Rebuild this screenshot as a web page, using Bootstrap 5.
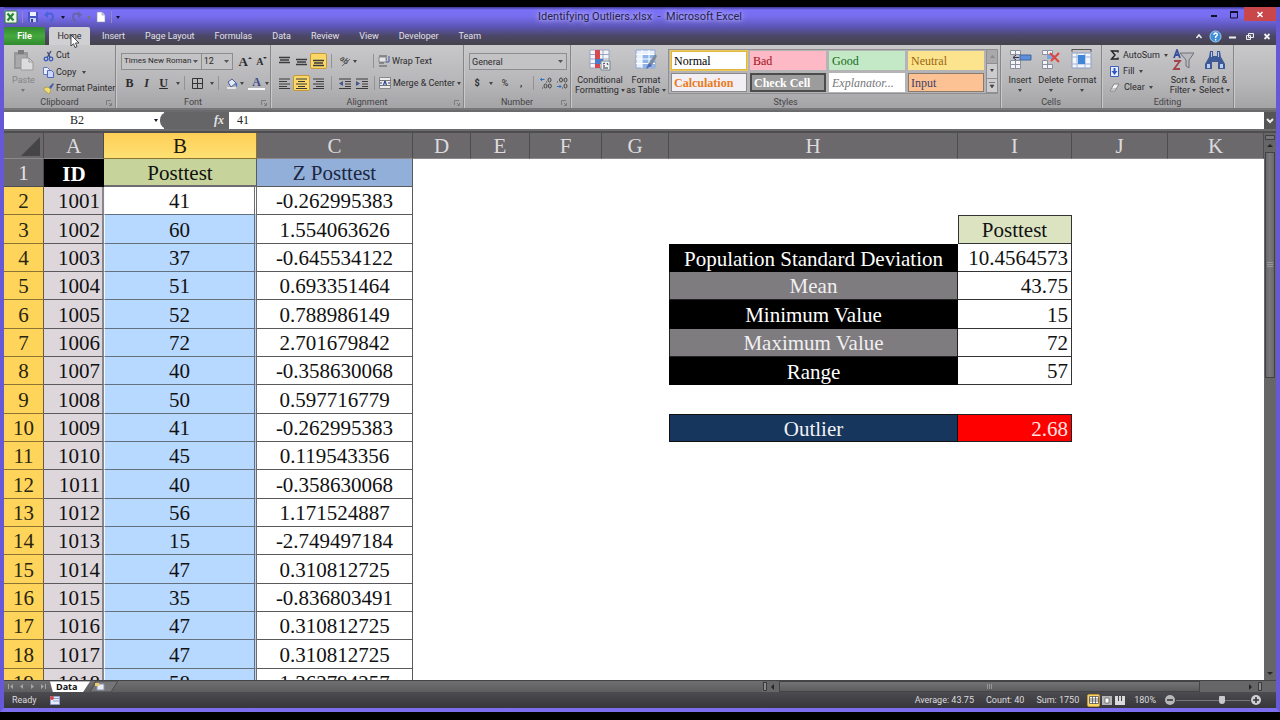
<!DOCTYPE html>
<html lang="en">
<head>
<meta charset="utf-8">
<meta name="viewport" content="width=device-width, initial-scale=1">
<title>Identifying Outliers.xlsx - Microsoft Excel</title>
<link href="https://cdn.jsdelivr.net/npm/bootstrap@5.3.0/dist/css/bootstrap.min.css" rel="stylesheet">
<style>
  :root { --ink: #2b2b2e; --line: #5a595b; }
  body { background: #000; padding: 7px 0 8px; font: 9px/11px Roboto, "Open Sans", sans-serif; color: var(--ink); }
  button, input, select { font: inherit; color: inherit; }
  button { background: none; border: 0; padding: 0; }
  svg { display: block; flex: none; }
  .win { border: solid #6658d6; border-width: 0 4px 4px; border-bottom-color: #7d6ef0; min-width: 1240px; }
  .top-area { background: linear-gradient(#3b3690 0, #7a70f8 3px, #766cec 10px, #5c55b4 20px, #4b4767 29px, #45424b 38px); }
  .title-row { height: 20px; }
  .side { flex: 1 1 0; }
  .doc-title { font-size: 11px; line-height: 20px; color: #26234a; text-shadow: 0 0 4px #c9c4ff, 0 0 6px #b5afff; }
  .vsep { width: 1px; height: 12px; background: #8e8abf; }
  .caret { width: 0; height: 0; border: 2px solid transparent; border-top: 3px solid #444; border-bottom: 0; flex: none; }
  .caret.dim { border-top-color: #777; }
  .caret.dark { border-top-color: #15122c; }
  .win-btn { width: 20px; height: 14px; }
  .win-close { width: 32px; background: #c9474b; }

  .tabs-row { height: 18px; color: #e2e0e8; }
  .tabs-row a { color: inherit; text-decoration: none; line-height: 18px; padding: 0 10px; }
  .tabs-row a.file-tab { background: linear-gradient(#2f8a2c, #47a83f 50%, #2f8c2d); color: #fff; padding: 0; width: 41px; text-align: center; border-radius: 2px 2px 0 0; font-weight: 600; }
  .tabs-row a.on { background: #d0cfd1; color: var(--ink); padding: 0; width: 41px; margin-right: 2px; text-align: center; border-radius: 2px 2px 0 0; }
  .mdi { width: 17px; height: 17px; }

  .ribbon { height: 65px; background: linear-gradient(#c8c7c9, #b6b5b7 60%, #a4a3a5); border-bottom: 2px solid #777678; }
  .grp { border-right: 1px solid #868587; box-shadow: 1px 0 #c9c8ca; position: relative; }
  .grp-body { height: 51px; padding-top: 2px; }
  .grp-name { height: 12px; line-height: 13px; text-align: center; color: #444347; }
  .launcher { position: absolute; right: 3px; bottom: 2px; }
  .g-clip { width: 112px; } .g-font { width: 155px; } .g-align { width: 193px; } .g-num { width: 107px; }
  .g-styles { width: 430px; } .g-cells { width: 101px; } .g-edit { width: 132px; }
  .two-rows { padding: 8px 0 0 5px; gap: 6px; }
  .two-rows > div { height: 16px; }
  .cmd { display: flex; align-items: center; gap: 2px; white-space: nowrap; }
  .combo { height: 17px; border: 1px solid #8d8c8e; border-radius: 0; padding: 0 0 0 2px; appearance: none; line-height: 12px;
    background: #c3c2c4 url("data:image/svg+xml,%3Csvg xmlns='http://www.w3.org/2000/svg' width='5' height='3'%3E%3Cpath d='M0 0h5L2.5 3z' fill='%23555'/%3E%3C/svg%3E") no-repeat right 3px center; }
  .c-name { width: 83px; font-size: 8px; } .c-size { width: 33px; margin-left: -1px; } .c-num { width: 98px; }
  .tool { width: 17px; height: 16px; display: flex; align-items: center; justify-content: center; }
  .tool.on, .view.on { background: #fbd768; border: 1px solid #c69a3a; border-radius: 2px; }
  .serif { font-family: "Liberation Serif", serif; }
  .big { display: flex; flex-direction: column; align-items: center; text-align: center; padding-top: 2px; line-height: 10px; white-space: nowrap; }
  .big svg { margin-bottom: 4px; }
  .vline { width: 1px; height: 14px; background: #929193; }

  .gallery { border: 1px solid #8f8e90; background: #b4b3b5; margin: 2px 0 0 5px; height: 45px; width: 330px; }
  .tiles { display: grid; grid-template-columns: repeat(4, 76px); grid-auto-rows: 19px; gap: 3px; padding: 1px 2px; }
  .tile { line-height: 16px; font-family: "Liberation Serif", serif; font-size: 12px; text-align: left; padding-left: 2px; border: 1px solid transparent; }
  .t-normal { background: #fff; border-color: #e2b73c; outline: 1px solid #e8c860; color: #000; }
  .t-bad { background: #fdb9c5; color: #a01020; } .t-good { background: #c3e9c6; color: #146a20; } .t-neutral { background: #fce48e; color: #9a6410; }
  .t-calc { background: #f2eff4; color: #ea7a1c; border-color: #8a8a8a; font-weight: bold; }
  .t-check { background: #9c9c9c; color: #fff; border: 2px double #4c4c4c; font-weight: bold; line-height: 14px; }
  .t-expl { background: #fff; color: #77767a; font-style: italic; }
  .t-input { background: #fdc294; color: #3e3f66; border-color: #8a7a6c; }
  .gal-nav { width: 11px; border-left: 1px solid #8f8e90; }
  .gal-nav button { flex: 1; border-bottom: 1px solid #8f8e90; background: #cccbcd; display: flex; align-items: center; justify-content: center; }
  .gal-nav button:first-child { background: #a9a8aa; }

  .fbar { background: #6b6a6d; padding: 2px 0; border-bottom: 2px solid #4e4d50; font: 12px/17px "Liberation Serif", serif; }
  .fbar input { border: 0; border-radius: 0; height: 17px; padding: 0; background: #fff; color: #222; outline: 0; min-width: 0; }
  .namebox { width: 160px; background: #fff; height: 17px; }
  .namebox input { width: 146px; text-align: center; }
  .fx { width: 69px; background: #656467; height: 17px; margin-left: -4px; border-radius: 8px 0 0 8px; color: #e4e4e4; padding-right: 5px; font-style: italic; font-weight: bold; }
  .expand { width: 12px; height: 17px; background: #555457; }

  .sheet { background: #fff; min-height: 0; }
  .pane { overflow: hidden; background: #fff; }
  table.xl { table-layout: fixed; border-collapse: separate; border-spacing: 0; width: 100%; min-width: 1260px; font: 21px/24px "Liberation Serif", serif; color: #111; }
  .xl th, .xl td { padding: 1px 0 0; text-align: center; font-weight: normal; white-space: nowrap; overflow: hidden; height: 28px; }
  .xl thead th { height: 26px; line-height: 24px; background: #6b696c; color: #dddbde; border-right: 1px solid #4d4c4e; border-bottom: 1px solid #8b898c; }
  .xl tbody tr:nth-child(3n) > * { height: 29px; }
  .xl tbody th { background: #ffd45a; border-right: 1px solid #6a5a3a; border-bottom: 1px solid #8b7433; color: #2a2412; }
  .xl tbody tr:first-child th { background: #6b696c; color: #e6e4e6; border-color: #4d4c4e; }
  .xl thead th.hot { background: linear-gradient(#ffcf57, #fde072); color: #1e1a10; border-color: #8b7433; }
  .xl .a { background: #ddd7dc; text-align: right; padding-right: 2px; border-right: 2px solid #88868a; border-bottom: 1px solid var(--line); }
  .xl .b { background: #b7d8ff; border-right: 3px double #6d6c70; border-left: 1px solid #f4f8ff; border-bottom: 1px solid #64707e; }
  .xl .b.active { background: #fff; }
  .xl .c { background: #fff; border-right: 1px solid var(--line); border-bottom: 1px solid var(--line); }
  .xl .h-id { background: #000; color: #fff; font-weight: bold; }
  .xl .h-b { background: #c6d49c; border-right: 1px solid var(--line); border-bottom: 2px solid #6d6c70; }
  .xl .h-c { background: #92afda; border-right: 1px solid var(--line); border-bottom: 1px solid var(--line); color: #1c2640; }
  .xl .k { background: #000; color: #fff; }
  .xl .g { background: #7f7c80; color: #f1eff1; border: solid #222; border-width: 0 1px 1px 1px; }
  .xl .v { text-align: right; padding-right: 3px; border-right: 1px solid #333; border-bottom: 1px solid #333; }
  .xl .vh { background: #dbe3c1; border-right: 1px solid #333; border-bottom: 1px solid #333; box-shadow: inset 1px 1px #333; }
  .xl .o { background: #17365d; color: #f1f1f5; border: 1px solid #111; }
  .xl .r { background: #fe0000; color: #ffe4e0; text-align: right; padding-right: 3px; border: solid #222; border-width: 1px 1px 1px 0; }

  .vbar { width: 12px; background: #666568; }
  .thumb-v { height: 226px; margin: 0 1px; border: 1px solid #434245; background: linear-gradient(90deg, #68676b, #7b797d, #68676b); }
  .tabbar { height: 12px; background: linear-gradient(#6f6e71, #5d5c5f); border-top: 1px solid #444346; }
  .tab-data { width: 40px; height: 11px; background: #fff; clip-path: polygon(0 0, 100% 0, 82% 100%, 3px 100%); color: #111; font: bold 9px/11px "Open Sans", sans-serif; text-decoration: none; padding-left: 6px; }
  .hbar { width: 502px; height: 11px; background: #666568; }
  .thumb-h { width: 421px; height: 11px; border: 1px solid #434245; background: linear-gradient(#737275, #5c5b5e); }
  .status { height: 16px; background: linear-gradient(#4c4b4f, #37363a); color: #dcdbde; }
  .view { width: 13px; height: 13px; display: flex; align-items: center; justify-content: center; }
  .zoom { appearance: none; width: 74px; height: 12px; background: linear-gradient(#77767a, #77767a) center / 100% 1px no-repeat; }
  .zoom::-webkit-slider-thumb { appearance: none; width: 6px; height: 8px; background: #c9c8cb; border-radius: 1px 1px 3px 3px; }
  .pointer { position: absolute; left: 70px; top: 34px; z-index: 5; }
</style>
</head>
<body class="vh-100 d-flex flex-column overflow-hidden">
<div class="win flex-grow-1 d-flex flex-column overflow-hidden">

  <header class="top-area">
    <div class="title-row d-flex">
      <div class="side d-flex align-items-center">
        <svg width="14" height="14" viewBox="0 0 14 14"><rect x="1" y="1" width="12" height="12" rx="1" fill="#eaf3e6" stroke="#2e7a36"/><path d="M3.500 3.500l6 7M9.500 3.500l-6 7" stroke="#26863a" stroke-width="2.200"/></svg>
        <span class="vsep ms-1"></span>
        <button class="ms-1" aria-label="Save"><svg width="12" height="12" viewBox="0 0 12 12"><path d="M1 1h10v10H2L1 10z" fill="#4855c4"/><path d="M3 1h6v4H3z" fill="#f0f2ff"/><path d="M3 7h6v4H3z" fill="#c9cef4"/><path d="M4 8h2v3H4z" fill="#333f90"/></svg></button>
        <button class="ms-1" aria-label="Undo"><svg width="14" height="12" viewBox="0 0 14 12"><path d="M4 3Q10 1 10 6Q10 9 7 10" fill="none" stroke="#4a62d8" stroke-width="2"/><path d="M1 4l4-4v7z" fill="#4a62d8"/></svg></button>
        <span class="caret dark ms-1"></span>
        <button class="ms-1" aria-label="Redo"><svg width="14" height="12" viewBox="0 0 14 12"><path d="M10 3Q4 1 4 6Q4 9 7 10" fill="none" stroke="#6764a8" stroke-width="2"/><path d="M13 4L9 0v7z" fill="#6764a8"/></svg></button>
        <span class="caret dim ms-1"></span>
        <button class="ms-1" aria-label="New"><svg width="12" height="12" viewBox="0 0 12 12"><path d="M2 1h5l3 3v7H2z" fill="#fff" stroke="#8d8db0" stroke-width=".6"/><path d="M7 1v3h3" fill="#d3d3e6" stroke="#8d8db0" stroke-width=".6"/></svg></button>
        <span class="vsep ms-1"></span>
        <span class="caret dark ms-1"></span>
      </div>
      <div class="doc-title">Identifying Outliers.xlsx&nbsp; -&nbsp; Microsoft Excel</div>
      <div class="side d-flex justify-content-end">
        <button class="win-btn" aria-label="Minimize"><svg width="20" height="14"><path d="M7 9h6" stroke="#12102c" stroke-width="2"/></svg></button>
        <button class="win-btn" aria-label="Maximize"><svg width="20" height="14"><path d="M6.500 5h7v6h-7z" fill="none" stroke="#12102c"/><path d="M6 5h8" stroke="#12102c" stroke-width="2"/></svg></button>
        <button class="win-btn win-close" aria-label="Close"><svg width="32" height="14"><path d="M13.500 5l5 5M18.500 5l-5 5" stroke="#fff" stroke-width="1.500"/></svg></button>
      </div>
    </div>
    <nav class="tabs-row d-flex align-items-end">
      <a class="file-tab" href="#">File</a>
      <a class="on ms-1" href="#">Home</a>
      <a href="#">Insert</a><a href="#">Page Layout</a><a href="#">Formulas</a><a href="#">Data</a><a href="#">Review</a><a href="#">View</a><a href="#">Developer</a><a href="#">Team</a>
      <div class="ms-auto d-flex">
        <button class="mdi" aria-label="Collapse ribbon"><svg width="16" height="17"><path d="M5.500 10L8 7l2.500 3" fill="none" stroke="#eee" stroke-width="1.500"/></svg></button>
        <button class="mdi" aria-label="Help"><svg width="16" height="17"><circle cx="7.500" cy="8.500" r="5.500" fill="#3f8fd8" stroke="#a7cdf0"/><path d="M5.800 7Q6 5 7.600 5Q9.400 5.200 9.300 6.800Q9 8 7.600 8.700V10M7.600 11v1.500" fill="none" stroke="#fff" stroke-width="1.400"/></svg></button>
        <button class="mdi" aria-label="Minimize workbook"><svg width="16" height="17"><path d="M4 9.500h7" stroke="#eee" stroke-width="2"/></svg></button>
        <button class="mdi" aria-label="Restore workbook"><svg width="16" height="17"><path d="M6.500 5.500h5v4h-5zM4.500 7.500h4v4h-4z" fill="#5b5776" stroke="#eee"/></svg></button>
        <button class="mdi" aria-label="Close workbook"><svg width="16" height="17"><path d="M5.500 6l5 5M10.500 6l-5 5" stroke="#eee" stroke-width="1.800"/></svg></button>
      </div>
    </nav>
  </header>

  <section class="ribbon d-flex">
    <div class="grp g-clip">
      <div class="grp-body d-flex">
        <button class="big ps-2" style="color:#858487">
          <svg width="22" height="22" viewBox="0 0 22 22"><path d="M2 3h14v17H2z" fill="#979698"/><path d="M6 1h6v4H6z" fill="#7c7b7d"/><path d="M4 6h10v12H4z" fill="#aaa9ab"/><path d="M9 9h8l4 4v8H9z" fill="#dcdbdd" stroke="#999"/><path d="M17 9v4h4" fill="none" stroke="#999"/></svg>
          Paste<span class="caret dim mt-1"></span>
        </button>
        <div class="d-flex flex-column justify-content-around align-items-start ps-1 ms-1">
          <button class="cmd"><svg width="11" height="12" viewBox="0 0 11 12"><path d="M8 1L4 8M4.500 2L7.500 8" stroke="#41507e" stroke-width="1.400"/><circle cx="3" cy="9" r="1.800" fill="none" stroke="#3a5cc0" stroke-width="1.300"/><circle cx="8" cy="9" r="1.800" fill="none" stroke="#3a5cc0" stroke-width="1.300"/></svg>Cut</button>
          <button class="cmd"><svg width="11" height="11" viewBox="0 0 11 11"><path d="M.5.5h4l2 2v5h-6z" fill="#e8edff" stroke="#6479c4"/><path d="M4.500 3.500h4l2 2v5h-6z" fill="#c9d6ff" stroke="#4e67bf"/></svg>Copy<span class="caret ms-1"></span></button>
          <button class="cmd"><svg width="11" height="11" viewBox="0 0 11 11"><path d="M6 4l4-4 1 1-3 5z" fill="#4b5fa8"/><path d="M1 5l4-1 3 3-2 4-5-4z" fill="#f1dd72" stroke="#a5913c" stroke-width=".7"/></svg>Format Painter</button>
        </div>
      </div>
      <div class="grp-name">Clipboard</div>
      <svg class="launcher" width="6" height="6"><path d="M.5 5V.5H5M3 3l2 2M5.500 3v2.500H3" fill="none" stroke="#7c7b7e"/></svg>
    </div>

    <div class="grp g-font">
      <div class="grp-body two-rows d-flex flex-column">
        <div class="d-flex align-items-center">
          <select class="combo c-name" aria-label="Font"><option>Times New Roman</option></select>
          <select class="combo c-size" aria-label="Font size"><option>12</option></select>
          <button class="tool serif fw-bold ms-1" style="font-size:13px" aria-label="Grow font">A<svg width="4" height="10"><path d="M0 3l2-2 2 2z" fill="#333"/></svg></button>
          <button class="tool serif fw-bold" style="font-size:10px" aria-label="Shrink font">A<svg width="4" height="10"><path d="M0 1l2 2 2-2z" fill="#333"/></svg></button>
        </div>
        <div class="d-flex align-items-center serif" style="font-size:12px">
          <button class="tool fw-bold">B</button>
          <button class="tool fst-italic fw-bold">I</button>
          <button class="tool fw-bold text-decoration-underline">U</button>
          <span class="caret ms-1"></span><span class="vline mx-1"></span>
          <button class="tool" aria-label="Borders"><svg width="11" height="11"><path d="M.5.5h10v10H.5zM5.500 0v11M0 5.500h11" fill="none" stroke="#333"/></svg></button>
          <span class="caret ms-1"></span><span class="vline mx-1"></span>
          <button class="tool" aria-label="Fill colour"><svg width="12" height="12"><path d="M2 5l4-3 4 4-5 4z" fill="#e4e9f7" stroke="#4d5d9a"/><path d="M9 5q3 1 2 5q-2-1-2-5" fill="#3c6fd0"/><path d="M1 10h9v2H1z" fill="#e6e6ea"/></svg></button>
          <span class="caret"></span>
          <button class="tool ms-1 fw-bold" style="color:#3d4b8e" aria-label="Font colour"><span class="border-bottom border-2 border-light px-1" style="line-height:11px">A</span></button>
          <span class="caret"></span>
        </div>
      </div>
      <div class="grp-name">Font</div>
      <svg class="launcher" width="6" height="6"><path d="M.5 5V.5H5M3 3l2 2M5.500 3v2.500H3" fill="none" stroke="#7c7b7e"/></svg>
    </div>

    <div class="grp g-align">
      <div class="grp-body two-rows d-flex flex-column">
        <div class="d-flex align-items-center">
          <button class="tool" aria-label="Top align"><svg width="11" height="11"><path d="M0 1.500h11M1 4h9M0 6.500h11" stroke="#3b3a3d" stroke-width="1.300"/></svg></button>
          <button class="tool" aria-label="Middle align"><svg width="11" height="11"><path d="M0 3.500h11M1 6h9M0 8.500h11" stroke="#3b3a3d" stroke-width="1.300"/></svg></button>
          <button class="tool on" aria-label="Bottom align"><svg width="11" height="11"><path d="M0 4.500h11M1 7h9M0 9.500h11" stroke="#3b3a3d" stroke-width="1.300"/></svg></button>
          <span class="vline ms-1"></span>
          <button class="tool ms-1" aria-label="Orientation"><svg width="12" height="12"><text x="0" y="7" font-size="8" transform="rotate(40 4 6)" fill="#333">ab</text><path d="M3 11L11 4" stroke="#666"/></svg></button>
          <span class="caret"></span>
          <span class="vline ms-3 me-1"></span>
          <button class="cmd"><svg width="12" height="12"><path d="M1 1h8M1 4h8M1 8h5M1 11h8" stroke="#555"/><path d="M1 2h7v5H1z" fill="#e6e6e9" stroke="#777" stroke-width=".8"/><path d="M11 1v6H8" fill="none" stroke="#3a5fb0"/></svg>Wrap Text</button>
        </div>
        <div class="d-flex align-items-center">
          <button class="tool" aria-label="Align left"><svg width="11" height="11"><path d="M0 1h11M0 3.500h8M0 6h11M0 8.500h8M0 10.500h11" stroke="#3b3a3d"/></svg></button>
          <button class="tool on" aria-label="Centre"><svg width="11" height="11"><path d="M0 1h11M2 3.500h7M0 6h11M2 8.500h7M0 10.500h11" stroke="#3b3a3d"/></svg></button>
          <button class="tool" aria-label="Align right"><svg width="11" height="11"><path d="M0 1h11M3 3.500h8M0 6h11M3 8.500h8M0 10.500h11" stroke="#3b3a3d"/></svg></button>
          <span class="vline ms-1"></span>
          <button class="tool ms-1" aria-label="Decrease indent"><svg width="12" height="11"><path d="M0 1h12M6 3.500h6M6 6h6M6 8.500h6M0 10.500h12" stroke="#3b3a3d"/><path d="M4 3v5L0 5.500z" fill="#44558a"/></svg></button>
          <button class="tool" aria-label="Increase indent"><svg width="12" height="11"><path d="M0 1h12M6 3.500h6M6 6h6M6 8.500h6M0 10.500h12" stroke="#3b3a3d"/><path d="M0 3v5l4-2.500z" fill="#44558a"/></svg></button>
          <span class="vline mx-1"></span>
          <button class="cmd"><svg width="12" height="12"><path d="M.5.5h11v11H.5z" fill="#e9e9ee" stroke="#888"/><path d="M0 3.500h12M0 8.500h12" stroke="#777"/><path d="M1 6h2M9 6h2M6 4L4.500 8M6 4l1.500 4" stroke="#2d468e" stroke-width="1.200"/></svg>Merge &amp; Center<span class="caret"></span></button>
        </div>
      </div>
      <div class="grp-name">Alignment</div>
      <svg class="launcher" width="6" height="6"><path d="M.5 5V.5H5M3 3l2 2M5.500 3v2.500H3" fill="none" stroke="#7c7b7e"/></svg>
    </div>

    <div class="grp g-num">
      <div class="grp-body two-rows d-flex flex-column">
        <div><select class="combo c-num d-block" aria-label="Number format"><option>General</option></select></div>
        <div class="d-flex align-items-center">
          <button class="tool fw-bold">$</button><span class="caret mx-1"></span>
          <button class="tool">%</button><button class="tool fw-bold">,</button>
          <span class="vline mx-1"></span>
          <button class="tool" aria-label="Increase decimal"><svg width="12" height="12"><g fill="none" stroke="#444"><path d="M.5 2.500h4M2 1L.5 2.500L2 4" stroke="#2f6fc4"/><ellipse cx="9.500" cy="3" rx="1.500" ry="2"/><ellipse cx="5.500" cy="9" rx="1.500" ry="2"/><ellipse cx="9.800" cy="9" rx="1.500" ry="2"/><path d="M2 11h1M6 5h1"/></g></svg></button>
          <button class="tool" aria-label="Decrease decimal"><svg width="12" height="12"><g fill="none" stroke="#444"><path d="M1 9.500h4M3.500 8L5 9.500L3.500 11" stroke="#2f6fc4"/><ellipse cx="5" cy="3" rx="1.500" ry="2"/><ellipse cx="9.500" cy="3" rx="1.500" ry="2"/><ellipse cx="9.500" cy="9" rx="1.500" ry="2"/><path d="M1 5h1M6 11h1"/></g></svg></button>
        </div>
      </div>
      <div class="grp-name">Number</div>
      <svg class="launcher" width="6" height="6"><path d="M.5 5V.5H5M3 3l2 2M5.500 3v2.500H3" fill="none" stroke="#7c7b7e"/></svg>
    </div>

    <div class="grp g-styles">
      <div class="grp-body d-flex">
        <button class="big" style="width:58px"><svg width="22" height="22"><path d="M1 1h19v18H1z" fill="#f4f5fa" stroke="#9aa5c4"/><path d="M1 5.500h19M1 10h19M1 14.500h19M7 1v18M14 1v18" stroke="#9aa5c4"/><path d="M6 1h5v9H6z" fill="#d8474b"/><path d="M6 10h8v5H6z" fill="#4b7bd0"/><path d="M6 15h5v4H6z" fill="#d8474b"/><path d="M12 12h9v9h-9z" fill="#eef0f6" stroke="#788"/><path d="M14 15l2-1M14 17h2M18 14l1 2M14 19h5" stroke="#333"/></svg>Conditional<span>Formatting <span class="caret d-inline-block align-middle"></span></span></button>
        <button class="big" style="width:34px"><svg width="22" height="22"><path d="M1 1h19v18H1z" fill="#e9f0fc" stroke="#8ea6d2"/><path d="M7 6h13v13H7z" fill="#8fb6ea"/><path d="M1 5.500h19M1 10h19M1 14.500h19M7 1v18M14 1v18" stroke="#fff"/><path d="M20 5l-6 9-3 5 6-3 5-9z" fill="#7e8a9c"/><path d="M11 20l3-6 3 3z" fill="#4e6bb5"/></svg>Format<span>as Table <span class="caret d-inline-block align-middle"></span></span></button>
        <div class="gallery d-flex justify-content-between">
          <div class="tiles">
            <button class="tile t-normal">Normal</button><button class="tile t-bad">Bad</button><button class="tile t-good">Good</button><button class="tile t-neutral">Neutral</button>
            <button class="tile t-calc">Calculation</button><button class="tile t-check">Check Cell</button><button class="tile t-expl">Explanator...</button><button class="tile t-input">Input</button>
          </div>
          <div class="gal-nav d-flex flex-column">
            <button aria-label="Previous styles"><svg width="5" height="3"><path d="M0 3h5L2.500 0z" fill="#888"/></svg></button><button aria-label="Next styles"><span class="caret"></span></button><button aria-label="More styles"><svg width="6" height="6"><path d="M0 .5h6M1 3h4L3 6z" fill="#444" stroke="#444" stroke-width=".6"/></svg></button>
          </div>
        </div>
      </div>
      <div class="grp-name">Styles</div>
    </div>

    <div class="grp g-cells">
      <div class="grp-body d-flex justify-content-center">
        <button class="big" style="width:31px"><svg width="23" height="22"><g fill="#f4f5f9" stroke="#8a8f9e"><path d="M1.500 1.500h5v4h-5zM6.500 1.500h5v4h-5zM1.500 15.500h5v4h-5zM6.500 15.500h5v4h-5zM1.500 11.500h5v4h-5zM6.500 11.500h5v4h-5z"/></g><path d="M11 6h11v5H11z" fill="#5f8fdc" stroke="#41689f"/><path d="M4 8.500h6M7 6L4 8.500L7 11" fill="none" stroke="#335"/></svg>Insert<span class="caret mt-1"></span></button>
        <button class="big" style="width:31px"><svg width="22" height="22"><g fill="#f4f5f9" stroke="#8a8f9e"><path d="M2.500 1.500h5v4h-5zM7.500 1.500h5v4h-5zM2.500 15.500h5v4h-5zM7.500 15.500h5v4h-5zM2.500 11.500h5v4h-5z"/></g><path d="M7 6h8v4H7z" fill="#7ea5e2"/><path d="M10 4l9 9M19 4l-8 8" stroke="#e2453c" stroke-width="2"/></svg>Delete<span class="caret mt-1"></span></button>
        <button class="big" style="width:31px"><svg width="22" height="22"><path d="M1 .500h19M1 0v3M20 0v3" stroke="#555"/><path d="M1 4h19v15H1z" fill="#f4f6fb" stroke="#8ea0c4"/><path d="M1 8h19M1 15h19M6 4v15M14 4v15" stroke="#9fb2d6"/><path d="M7 6h7v9H7z" fill="#3f86d8"/></svg>Format<span class="caret mt-1"></span></button>
      </div>
      <div class="grp-name">Cells</div>
    </div>

    <div class="grp g-edit">
      <div class="grp-body d-flex">
        <div class="d-flex flex-column justify-content-around align-items-start" style="width:65px;padding-left:8px">
          <button class="d-flex align-items-center gap-1 text-nowrap"><svg width="9" height="10"><path d="M8 2.500V1H1.500L5 5L1.500 9H8V7.500" fill="none" stroke="#222" stroke-width="1.400"/></svg>AutoSum<span class="caret"></span></button>
          <button class="d-flex align-items-center gap-1"><svg width="9" height="11"><path d="M.5.5h8v10h-8z" fill="#e8efff" stroke="#3e60bf"/><path d="M3.500 2h2v3H7.500L4.500 9L1.500 5h2z" fill="#2e58c6"/></svg>Fill<span class="caret"></span></button>
          <button class="d-flex align-items-center gap-1"><svg width="10" height="9"><path d="M4 1h5l-4 7H0z" fill="#f2f2f5" stroke="#88878b"/><path d="M1 6h5" stroke="#999"/></svg>Clear<span class="caret"></span></button>
        </div>
        <button class="big" style="width:32px"><svg width="22" height="22" viewBox="0 0 22 22"><path d="M2 9l3-8 3 8M3 6h4" fill="none" stroke="#38519f" stroke-width="1.800"/><path d="M2 12h6l-6 8h6" fill="none" stroke="#a3424a" stroke-width="1.800"/><path d="M8 4h14l-5 7v8l-3-2v-6z" fill="#b9bac0" stroke="#6f7077"/></svg>Sort &amp;<span>Filter <span class="caret d-inline-block align-middle"></span></span></button>
        <button class="big" style="width:31px"><svg width="22" height="22" viewBox="0 0 22 22"><path d="M6 2h3v5h4V2h3l1 6 4 7v5h-7v-7h-6v7H1v-5l4-7z" fill="#3d5a96"/><path d="M3 15h3v4H3zM16 15h3v4h-3zM7 3h1v5H7zM14 3h1v5h-1z" fill="#b9cdf3"/></svg>Find &amp;<span>Select <span class="caret d-inline-block align-middle"></span></span></button>
      </div>
      <div class="grp-name">Editing</div>
    </div>
  </section>

  <section class="fbar d-flex">
    <div class="namebox d-flex align-items-center"><input aria-label="Name box" value="B2"><span class="caret dark ms-1"></span></div>
    <div class="fx text-end">fx</div>
    <input class="flex-grow-1 ps-2" aria-label="Formula" value="41">
    <button class="expand d-flex align-items-center justify-content-center" aria-label="Expand formula bar"><svg width="8" height="6"><path d="M1 1l3 3 3-3" fill="none" stroke="#eee" stroke-width="2"/></svg></button>
  </section>

  <main class="sheet flex-grow-1 d-flex overflow-hidden">
    <div class="pane flex-grow-1">
      <table class="xl">
        <colgroup><col style="width:40px"><col style="width:60px"><col style="width:153px"><col style="width:156px"><col style="width:58px"><col style="width:59px"><col style="width:72px"><col style="width:67px"><col style="width:289px"><col style="width:114px"><col style="width:96px"><col></colgroup>
        <thead><tr><th aria-label="Select all"><svg width="39" height="24"><path d="M36 3v19H17z" fill="#454446"/></svg></th><th>A</th><th class="hot">B</th><th>C</th><th>D</th><th>E</th><th>F</th><th>G</th><th>H</th><th>I</th><th>J</th><th>K</th></tr></thead>
        <tbody>
          <tr><th>1</th><td class="h-id">ID</td><td class="h-b">Posttest</td><td class="h-c">Z Posttest</td><td colspan="8"></td></tr>
          <tr><th>2</th><td class="a">1001</td><td class="b active">41</td><td class="c">-0.262995383</td><td colspan="8"></td></tr>
          <tr><th>3</th><td class="a">1002</td><td class="b">60</td><td class="c">1.554063626</td><td colspan="5"></td><td class="vh">Posttest</td><td colspan="2"></td></tr>
          <tr><th>4</th><td class="a">1003</td><td class="b">37</td><td class="c">-0.645534122</td><td colspan="4"></td><td class="k">Population Standard Deviation</td><td class="v">10.4564573</td><td colspan="2"></td></tr>
          <tr><th>5</th><td class="a">1004</td><td class="b">51</td><td class="c">0.693351464</td><td colspan="4"></td><td class="g">Mean</td><td class="v">43.75</td><td colspan="2"></td></tr>
          <tr><th>6</th><td class="a">1005</td><td class="b">52</td><td class="c">0.788986149</td><td colspan="4"></td><td class="k">Minimum Value</td><td class="v">15</td><td colspan="2"></td></tr>
          <tr><th>7</th><td class="a">1006</td><td class="b">72</td><td class="c">2.701679842</td><td colspan="4"></td><td class="g">Maximum Value</td><td class="v">72</td><td colspan="2"></td></tr>
          <tr><th>8</th><td class="a">1007</td><td class="b">40</td><td class="c">-0.358630068</td><td colspan="4"></td><td class="k">Range</td><td class="v">57</td><td colspan="2"></td></tr>
          <tr><th>9</th><td class="a">1008</td><td class="b">50</td><td class="c">0.597716779</td><td colspan="8"></td></tr>
          <tr><th>10</th><td class="a">1009</td><td class="b">41</td><td class="c">-0.262995383</td><td colspan="4"></td><td class="o">Outlier</td><td class="r">2.68</td><td colspan="2"></td></tr>
          <tr><th>11</th><td class="a">1010</td><td class="b">45</td><td class="c">0.119543356</td><td colspan="8"></td></tr>
          <tr><th>12</th><td class="a">1011</td><td class="b">40</td><td class="c">-0.358630068</td><td colspan="8"></td></tr>
          <tr><th>13</th><td class="a">1012</td><td class="b">56</td><td class="c">1.171524887</td><td colspan="8"></td></tr>
          <tr><th>14</th><td class="a">1013</td><td class="b">15</td><td class="c">-2.749497184</td><td colspan="8"></td></tr>
          <tr><th>15</th><td class="a">1014</td><td class="b">47</td><td class="c">0.310812725</td><td colspan="8"></td></tr>
          <tr><th>16</th><td class="a">1015</td><td class="b">35</td><td class="c">-0.836803491</td><td colspan="8"></td></tr>
          <tr><th>17</th><td class="a">1016</td><td class="b">47</td><td class="c">0.310812725</td><td colspan="8"></td></tr>
          <tr><th>18</th><td class="a">1017</td><td class="b">47</td><td class="c">0.310812725</td><td colspan="8"></td></tr>
          <tr><th>19</th><td class="a">1018</td><td class="b">58</td><td class="c">1.362794257</td><td colspan="8"></td></tr>
        </tbody>
      </table>
    </div>
    <div class="vbar d-flex flex-column">
      <svg width="12" height="19"><path d="M1.500 2.500h9v4h-9z" fill="#77767a" stroke="#3f3e41"/><path d="M3 14h6l-3-3z" fill="#252427"/></svg>
      <div class="thumb-v d-flex align-items-center justify-content-center"><svg width="6" height="6"><path d="M0 .5h6M0 2.500h6M0 4.500h6" stroke="#98979a"/></svg></div>
      <svg class="mt-auto" width="12" height="12"><path d="M3 4h6l-3 3z" fill="#252427"/></svg>
    </div>
  </main>

  <div class="tabbar d-flex">
    <svg width="46" height="11"><g fill="#a5a4a7"><path d="M4 3h1v5H4zM9 3v5L6 5.500zM19 3v5l-3-2.500zM27 3v5l3-2.500zM37 3v5l3-2.500zM41 3h1v5h-1z"/></g></svg>
    <a class="tab-data" href="#">Data</a>
    <svg width="28" height="11"><path d="M0 11L6 0h22l-7 11z" fill="#757477" stroke="#4b4a4d"/><path d="M7 3h7v6H7z" fill="#e9ecf4" stroke="#8a93b4"/><path d="M5 2h4v3H5z" fill="#f0cd62"/></svg>
    <div class="hbar ms-auto d-flex">
      <svg width="17" height="11"><path d="M1.500 1.500h3v8h-3z" fill="#8a898c" stroke="#39383b"/><path d="M12 3v6L9 6z" fill="#252427"/></svg>
      <div class="thumb-h d-flex align-items-center justify-content-center"><svg width="6" height="5"><path d="M.5 0v5M2.500 0v5M4.500 0v5" stroke="#98979a"/></svg></div>
      <svg class="ms-auto" width="20" height="11"><path d="M5 3v6l3-3z" fill="#252427"/><path d="M14.500 1.500h3v8h-3z" fill="#8a898c" stroke="#39383b"/></svg>
    </div>
    <div class="vbar"></div>
  </div>

  <footer class="status d-flex align-items-center">
    <span class="ps-1 ms-1">Ready</span>
    <button class="ms-2 ps-1" aria-label="Record macro"><svg width="12" height="10"><path d="M1.500 1.500h9v8h-9z" fill="#e6eafa" stroke="#8fa0cf"/><path d="M4 3.500h6M4 6h6" stroke="#8fa0cf"/><circle cx="3" cy="3" r="2" fill="#d8464a"/></svg></button>
    <div class="ms-auto d-flex align-items-center">
      <span>Average: 43.75</span><span class="ms-2 ps-1">Count: 40</span><span class="ms-2 ps-1">Sum: 1750</span>
      <button class="view on ms-2" aria-label="Normal view"><svg width="10" height="8"><path d="M.5.5h9v7h-9zM3.500 0v8M6.500 0v8M0 3h10M0 5h10" fill="#fff" stroke="#555" stroke-width=".8"/></svg></button>
      <button class="view" aria-label="Page layout view"><svg width="10" height="9"><path d="M0 0h10v9H0z" fill="#b5b4b7"/><path d="M3 2h4v5H3z" fill="#fff" stroke="#555" stroke-width=".7"/></svg></button>
      <button class="view" aria-label="Page break view"><svg width="10" height="9"><path d="M0 0h10v9H0z" fill="#dad9dc"/><path d="M3.500 0v5M6.500 0v5" stroke="#444"/></svg></button>
      <span class="ms-2">180%</span>
      <button class="ms-2" aria-label="Zoom out"><svg width="12" height="12"><circle cx="6" cy="6" r="5" fill="#b8b7ba"/><path d="M3 6h6" stroke="#39383b" stroke-width="1.600"/></svg></button>
      <input class="zoom" type="range" min="0" max="100" value="63" aria-label="Zoom">
      <button style="margin-right:14px" aria-label="Zoom in"><svg width="12" height="12"><circle cx="6" cy="6" r="5" fill="#d0cfd2"/><path d="M3 6h6M6 3v6" stroke="#39383b" stroke-width="1.600"/></svg></button>
    </div>
  </footer>
</div>
<svg class="pointer" width="10" height="15" viewBox="0 0 10 15"><path d="M1 1v11l2.500-2.300L5 13.500l2-.8L5.500 9H9z" fill="#fff" stroke="#222" stroke-width=".8"/></svg>
<script src="https://cdn.jsdelivr.net/npm/bootstrap@5.3.0/dist/js/bootstrap.bundle.min.js"></script>
</body>
</html>
